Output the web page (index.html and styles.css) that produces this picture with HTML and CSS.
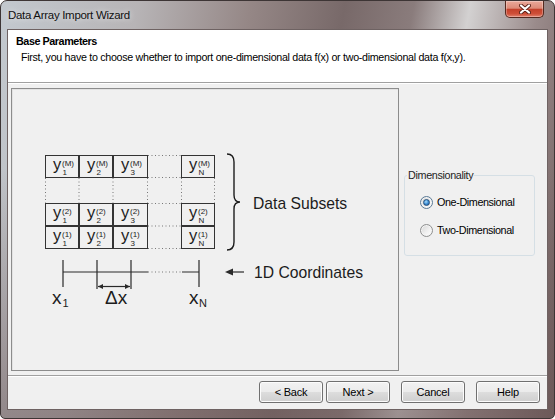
FILE: index.html
```html
<!DOCTYPE html>
<html lang="en">
<head>
    <meta charset="UTF-8">
    <title>Data Array Import Wizard</title>
    <link rel="stylesheet" href="styles.css">
</head>
<body>

<div class="window">
    <div class="titlebar">
        <span class="title">Data Array Import Wizard</span>
        <span class="close">
            <svg width="12" height="10" viewBox="0 0 12 10">
                <path d="M2 1.5 L10 8.5 M10 1.5 L2 8.5" stroke="#5a2218" stroke-width="4" stroke-linecap="round"/>
                <path d="M2 1.5 L10 8.5 M10 1.5 L2 8.5" stroke="#fff" stroke-width="2.2" stroke-linecap="round"/>
            </svg>
        </span>
    </div>

    <div class="client">
        <div class="header">
            <div class="heading">Base Parameters</div>
            <div class="subheading">First, you have to choose whether to import one-dimensional data f(x) or two-dimensional data f(x,y).</div>
        </div>

        <div class="main">
            <div class="preview">
                <svg class="diagram" width="386" height="281" viewBox="0 0 386 281">
                    <!-- data cells -->
                    <g class="cells">
                        <rect x="33.5" y="66.5" width="33" height="22"/>
                        <rect x="67.5" y="66.5" width="33" height="22"/>
                        <rect x="101.5" y="66.5" width="34" height="22"/>
                        <rect x="169.5" y="66.5" width="33" height="22"/>
                        <rect x="33.5" y="114.5" width="33" height="22"/>
                        <rect x="67.5" y="114.5" width="33" height="22"/>
                        <rect x="101.5" y="114.5" width="34" height="22"/>
                        <rect x="169.5" y="114.5" width="33" height="22"/>
                        <rect x="33.5" y="137.5" width="33" height="22"/>
                        <rect x="67.5" y="137.5" width="33" height="22"/>
                        <rect x="101.5" y="137.5" width="34" height="22"/>
                        <rect x="169.5" y="137.5" width="33" height="22"/>
                    </g>

                    <!-- dotted gaps -->
                    <g class="dots">
                        <path d="M136 66.5 H169 M136 88.5 H169 M136 114.5 H169 M136 137 H169 M136 159.5 H169"/>
                        <path d="M33.5 89 V114 M67 89 V114 M101 89 V114 M135.5 89 V114 M169.5 89 V114 M202.5 89 V114"/>
                        <path d="M136 183 H170"/>
                    </g>

                    <!-- cell labels -->
                    <g class="labels">
                        <text class="y" x="41" y="80.5">y</text><text class="sup" x="50" y="76.5">(M)</text><text class="sub" x="50.5" y="85.5">1</text>
                        <text class="y" x="75" y="80.5">y</text><text class="sup" x="84" y="76.5">(M)</text><text class="sub" x="84.5" y="85.5">2</text>
                        <text class="y" x="109" y="80.5">y</text><text class="sup" x="118" y="76.5">(M)</text><text class="sub" x="118.5" y="85.5">3</text>
                        <text class="y" x="177" y="80.5">y</text><text class="sup" x="186" y="76.5">(M)</text><text class="sub" x="186.5" y="85.5">N</text>

                        <text class="y" x="41" y="128.5">y</text><text class="sup" x="50" y="124.5">(2)</text><text class="sub" x="50.5" y="133.5">1</text>
                        <text class="y" x="75" y="128.5">y</text><text class="sup" x="84" y="124.5">(2)</text><text class="sub" x="84.5" y="133.5">2</text>
                        <text class="y" x="109" y="128.5">y</text><text class="sup" x="118" y="124.5">(2)</text><text class="sub" x="118.5" y="133.5">3</text>
                        <text class="y" x="177" y="128.5">y</text><text class="sup" x="186" y="124.5">(2)</text><text class="sub" x="186.5" y="133.5">N</text>

                        <text class="y" x="41" y="151.5">y</text><text class="sup" x="50" y="147.5">(1)</text><text class="sub" x="50.5" y="156.5">1</text>
                        <text class="y" x="75" y="151.5">y</text><text class="sup" x="84" y="147.5">(1)</text><text class="sub" x="84.5" y="156.5">2</text>
                        <text class="y" x="109" y="151.5">y</text><text class="sup" x="118" y="147.5">(1)</text><text class="sub" x="118.5" y="156.5">3</text>
                        <text class="y" x="177" y="151.5">y</text><text class="sup" x="186" y="147.5">(1)</text><text class="sub" x="186.5" y="156.5">N</text>
                    </g>

                    <!-- brace -->
                    <path class="brace" d="M215 65 Q222 65 222 73 L222 106 Q222 113 228 113 Q222 113 222 120 L222 153 Q222 161 215 161"/>
                    <text class="big" x="241" y="120">Data Subsets</text>

                    <!-- coordinate axis -->
                    <g class="axis">
                        <path d="M51 183 H136 M170 183 H187"/>
                        <path d="M51 171 V198 M85 171 V200 M119 171 V200 M187 171 V198"/>
                        <path d="M86 197.5 H118"/>
                        <path class="head" d="M86 197.5 L91 195 L91 200 Z M118 197.5 L113 195 L113 200 Z"/>
                        <path d="M219 183 H232"/>
                        <path class="head" d="M213 183 L221 179.5 L221 186.5 Z"/>
                    </g>
                    <text class="big" x="242" y="189">1D Coordinates</text>

                    <text class="axislabel" x="40" y="215">x</text><text class="axissub" x="50.5" y="218">1</text>
                    <text class="axislabel" x="93" y="215">Δx</text>
                    <text class="axislabel" x="177" y="215">x</text><text class="axissub" x="187" y="218">N</text>
                </svg>
            </div>

            <div class="side">
                <fieldset class="group">
                    <legend>Dimensionality</legend>
                    <label class="option"><span class="radio checked"></span>One-Dimensional</label>
                    <label class="option second"><span class="radio"></span>Two-Dimensional</label>
                </fieldset>
            </div>
        </div>

        <div class="footer">
            <button class="btn">&lt; Back</button>
            <button class="btn next">Next &gt;</button>
            <button class="btn wide">Cancel</button>
            <button class="btn wide">Help</button>
        </div>
    </div>
</div>

</body>
</html>
```

FILE: styles.css
```css
body {
    margin: 0;
    font-family: "Liberation Sans", Arial, sans-serif;
    font-size: 11px;
    color: #000;
}
.window {
    width: 555px;
    height: 419px;
    box-sizing: border-box;
    border: 1px solid #3d3535;
    border-radius: 7px 7px 5px 5px;
    background:
        linear-gradient(rgba(110, 90, 90, 0) 0%, rgba(110, 90, 90, 0) 40%, rgba(110, 90, 90, 0.55) 100%),
        linear-gradient(100deg, #c3c9cf 0%, #b7b4b6 22%, #958786 40%, #786969 55%, #8a7c7c 66%, #d3d1d1 75%, #9a8b8b 86%, #6a5757 100%);
    display: flex;
    flex-direction: column;
    overflow: hidden;
}
.titlebar {
    height: 29px;
    display: flex;
    align-items: flex-start;
    padding-left: 7px;
}
.title {
    line-height: 29px;
    font-size: 11.5px;
    letter-spacing: -0.3px;
    color: #111;
    text-shadow: 0 0 6px rgba(255, 255, 255, 0.8);
}
.close {
    margin-left: auto;
    margin-right: 10px;
    width: 39px;
    height: 17px;
    box-sizing: border-box;
    border: 1px solid #55291f;
    border-top: none;
    border-radius: 0 0 5px 5px;
    background: linear-gradient(#eaa99a 0%, #dd8b78 45%, #c4412b 52%, #cf4f38 80%, #e08471 100%);
    box-shadow: inset 0 0 0 1px rgba(255, 255, 255, 0.3);
    display: flex;
    align-items: center;
    justify-content: center;
}
.client {
    margin: 0 7px;
    height: 379px;
    background: #f0f0f0;
    display: flex;
    flex-direction: column;
    box-shadow: 0 0 0 1px #6e6262;
}
.header {
    height: 53px;
    box-sizing: border-box;
    background: #fff;
    border-bottom: 1px solid #a0a0a0;
    padding: 4px 0 0 8px;
}
.heading {
    font-weight: bold;
    font-size: 10.8px;
    line-height: 14px;
    letter-spacing: -0.45px;
}
.subheading {
    font-size: 10.7px;
    line-height: 14px;
    margin-top: 2px;
    padding-left: 5px;
    letter-spacing: -0.3px;
}
.main {
    display: flex;
    height: 292px;
    box-sizing: border-box;
    padding: 5px 0 0 3px;
    box-shadow: inset 0 1px #fff;
}
.preview {
    width: 388px;
    height: 283px;
    box-sizing: border-box;
    border: 1px solid #8c8c8c;
    box-shadow: inset 1px 1px 0 #e2e2e2;
}
.diagram {
    display: block;
    font-family: "Liberation Sans", Arial, sans-serif;
}
.cells rect {
    fill: none;
    stroke: #333;
    stroke-width: 1;
}
.dots path {
    fill: none;
    stroke: #777;
    stroke-width: 1;
    stroke-dasharray: 1 2.5;
}
.labels text {
    fill: #1c1c1c;
}
.y {
    font-size: 16.5px;
}
.sup,
.sub {
    font-size: 8px;
}
.brace {
    fill: none;
    stroke: #1c1c1c;
    stroke-width: 1.4;
}
.big {
    font-size: 15.7px;
    fill: #1c1c1c;
}
.axis path {
    fill: none;
    stroke: #2a2a2a;
    stroke-width: 1.2;
}
.axis .head {
    fill: #2a2a2a;
    stroke: none;
}
.axislabel {
    font-size: 19px;
    fill: #1c1c1c;
}
.axissub {
    font-size: 11px;
    fill: #1c1c1c;
}
.side {
    flex: 1;
    padding-left: 5px;
}
.group {
    margin: 80px 0 0;
    width: 131px;
    box-sizing: border-box;
    border: 1px solid #d5dfe5;
    border-radius: 3px;
    padding: 0 0 18px 2px;
    min-width: 0;
}
.group legend {
    padding: 0 1px;
    line-height: 14px;
    font-size: 10.8px;
    letter-spacing: -0.35px;
    color: #1e1e1e;
}
.option {
    display: flex;
    align-items: center;
    height: 14px;
    margin-top: 13px;
    padding-left: 13px;
    font-size: 10.8px;
    letter-spacing: -0.4px;
}
.option.second {
    margin-top: 14px;
}
.radio {
    width: 13px;
    height: 13px;
    box-sizing: border-box;
    margin-right: 4px;
    border: 1px solid #8e8f8f;
    border-radius: 50%;
    background: linear-gradient(135deg, #d4d4d4 0%, #f2f2f2 60%, #ffffff 100%);
    box-shadow: inset 0 0 0 1px #f4f4f4;
    display: flex;
    align-items: center;
    justify-content: center;
}
.radio.checked {
    border-color: #5a7a96;
}
.radio.checked::after {
    content: "";
    width: 5px;
    height: 5px;
    border-radius: 50%;
    border: 1px solid #24507c;
    background: radial-gradient(circle at 40% 35%, #a8dcfa 0%, #3d8fd6 50%, #1b4f8e 100%);
}
.footer {
    flex: 1;
    border-top: 1px solid #a0a0a0;
    box-shadow: inset 0 1px #fff;
    display: flex;
    justify-content: flex-end;
    align-items: flex-start;
    padding: 5px 7px 0 0;
}
.btn {
    width: 64px;
    height: 22px;
    padding: 0;
    border: 1px solid #707070;
    border-radius: 3px;
    background: linear-gradient(#f2f2f2 0%, #ebebeb 50%, #dddddd 50%, #cfcfcf 100%);
    box-shadow: inset 0 0 0 1px #fcfcfc;
    font-family: inherit;
    font-size: 11px;
    letter-spacing: -0.2px;
    color: #000;
}
.next {
    margin-left: 3px;
}
.wide {
    margin-left: 11px;
}
```
